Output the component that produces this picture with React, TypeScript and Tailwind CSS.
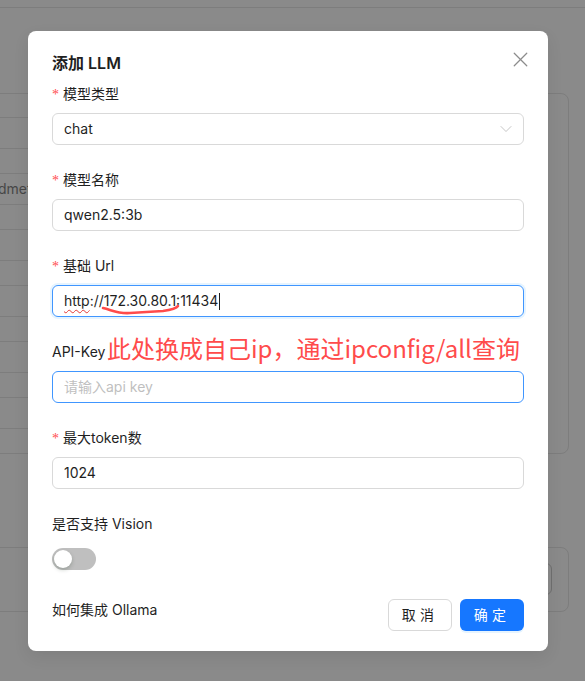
import React from 'react';
import { X, ChevronDown } from 'lucide-react';

const rowHeights = ['h-6', 'h-[31px]', 'h-[25px]', 'h-[31px]', 'h-[25px]', 'h-[31px]', 'h-[25px]', 'h-[31px]', 'h-[25px]', 'h-[31px]', 'h-[25px]', 'h-[31px]'];

const Label: React.FC<{ text: string; required?: boolean; children?: React.ReactNode }> = ({ text, required, children }) => (
  <div className="relative pb-2">
    <div className="h-[22px] leading-[22px] text-sm text-[#1f1f1f]">
      {required && <span className="mr-1 font-['Liberation_Serif',serif] text-sm text-[#ff4d4f]">*</span>}
      {text}
    </div>
    {children}
  </div>
);

const TextBox: React.FC<{ value?: string; placeholder?: string; hovered?: boolean }> = ({ value, placeholder, hovered }) => (
  <div
    className={`relative flex h-8 items-center rounded-md border bg-white px-[11px] text-sm ${
      hovered ? 'border-[#4096ff]' : 'border-[#d9d9d9]'
    }`}
  >
    {value ? <span className="text-[#1f1f1f]">{value}</span> : <span className="text-[#bfbfbf]">{placeholder}</span>}
  </div>
);

const App: React.FC = () => {
  return (
    <div className="relative h-[681px] w-[585px] overflow-hidden bg-[#8a8a8a] font-['Inter','Noto_Sans_CJK_SC',sans-serif]">
      {/* page behind the mask */}
      <div className="flex flex-col">
        <div className="h-2 border-b border-[#7d7d7d]" />
        <div className="-ml-4 mr-4 mt-[85px] h-[361px] rounded-lg border border-[#7d7d7d]">
          <div className="mr-10 flex flex-col">
            {rowHeights.map((h, i) => (
              <div key={i} className={`${h} flex items-center border-b border-[#7d7d7d] pl-[13px] text-sm text-[#474747]`}>
                {i === 3 ? 'dmeta' : ''}
              </div>
            ))}
          </div>
        </div>
        <div className="-ml-4 mr-4 mt-[93px] flex h-[65px] justify-end rounded-lg border border-[#7d7d7d] pr-4 pt-[15px]">
          <div className="h-8 w-20 rounded-md border border-[#6f6f6f]" />
        </div>
      </div>

      {/* modal */}
      <div className="absolute left-[28px] top-[31px] w-[520px] rounded-lg bg-white px-6 py-5 shadow-[0_6px_16px_rgba(0,0,0,0.08)]">
        <button className="absolute right-[17px] top-[17px] flex h-[22px] w-[22px] items-center justify-center text-[#8c8c8c]">
          <X size={25} strokeWidth={1.2} className="shrink-0" />
        </button>
        <div className="mb-2 h-6 text-base font-semibold leading-6 text-[#1f1f1f]">添加 LLM</div>

        <div className="mb-6">
          <Label text="模型类型" required />
          <div className="flex h-8 items-center justify-between rounded-md border border-[#d9d9d9] pl-[11px] pr-[7px] text-sm text-[#1f1f1f]">
            <span>chat</span>
            <ChevronDown size={20} strokeWidth={1.1} className="text-[#bfbfbf]" />
          </div>
        </div>

        <div className="mb-6">
          <Label text="模型名称" required />
          <TextBox value="qwen2.5:3b" />
        </div>

        <div className="mb-6">
          <Label text="基础 Url" required />
          <div className="relative">
            <div className="relative flex h-8 items-center rounded-md border border-[#4096ff] bg-white px-[11px] text-sm text-[#1f1f1f] shadow-[0_0_0_2px_rgba(5,145,255,0.1)]">
              <span className="underline decoration-[#e53935] decoration-wavy decoration-1 underline-offset-[3px]">http</span>
              <span>://172.30.80.1:11434</span>
              <span className="ml-px h-[17px] w-px bg-[#1f1f1f]" />
            </div>
            <svg className="pointer-events-none absolute left-0 top-0" width="472" height="40" viewBox="0 0 472 40">
              <path
                d="M51 23 C60 25 66 29 78 28 L111 26 C119 25 124 24 126 21"
                fill="none"
                stroke="#ff4b4b"
                strokeWidth="2.6"
                strokeLinecap="round"
              />
            </svg>
          </div>
        </div>

        <div className="mb-6">
          <Label text="API-Key">
            <span className="absolute left-[55px] top-[-9px] whitespace-nowrap font-['Noto_Sans_CJK_SC',sans-serif] text-2xl leading-8 text-[#ff4b4b]">
              此处换成自己ip，通过ipconfig/all查询
            </span>
          </Label>
          <TextBox placeholder="请输入api key" hovered />
        </div>

        <div className="mb-6">
          <Label text="最大token数" required />
          <TextBox value="1024" />
        </div>

        <div className="mb-6">
          <Label text="是否支持 Vision" />
          <div className="flex h-8 items-center">
            <div className="relative h-[22px] w-11 rounded-full bg-[#bfbfbf]">
              <div className="absolute left-[2px] top-[2px] h-[18px] w-[18px] rounded-full bg-white shadow-[0_2px_4px_rgba(0,35,11,0.2)]" />
            </div>
          </div>
        </div>

        <div className="flex items-start justify-between">
          <span className="text-sm leading-[22px] text-[#1f1f1f]">如何集成 Ollama</span>
          <div className="flex gap-2">
            <button className="h-8 w-16 rounded-md border border-[#d9d9d9] bg-white text-sm tracking-[0.3em] text-[#1f1f1f]">
              取消
            </button>
            <button className="h-8 w-16 rounded-md bg-[#1677ff] text-sm tracking-[0.3em] text-white shadow-[0_2px_0_rgba(5,145,255,0.1)]">
              确定
            </button>
          </div>
        </div>
      </div>
    </div>
  );
};

export default App;
